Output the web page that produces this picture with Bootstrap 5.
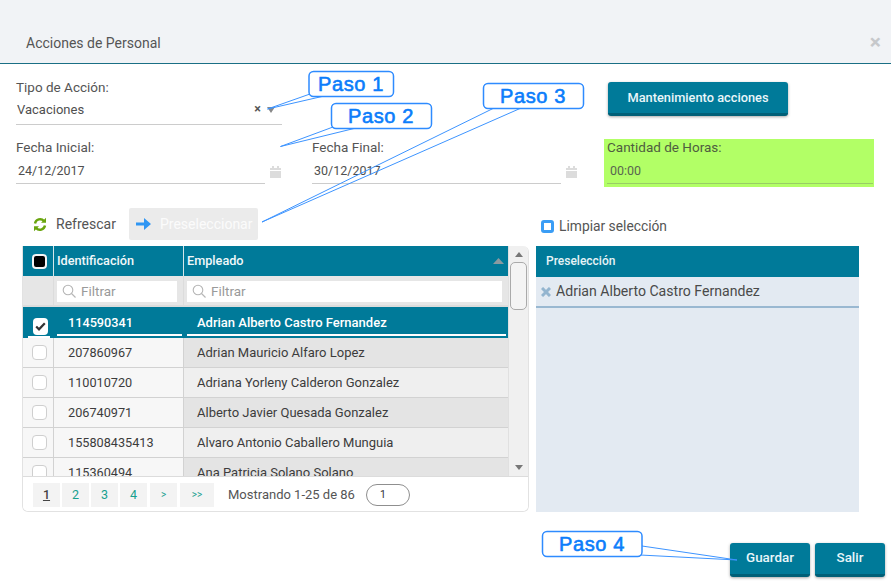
<!DOCTYPE html>
<html lang="es">
<head>
<meta charset="utf-8">
<title>Acciones de Personal</title>
<link href="https://cdn.jsdelivr.net/npm/bootstrap@5.3.0/dist/css/bootstrap.min.css" rel="stylesheet">
<style>
html,body{height:100%;overflow:hidden}
body{font-family:Roboto,"Liberation Sans",sans-serif;font-size:14px;color:#4a4a4a;background:#fff;position:relative}
.hdr{height:64px;background:#f1f3f6;border-bottom:1px solid #1a6f85;padding:0 10px 0 26px}
.hdr-title{font-size:14px;line-height:1;padding-bottom:13px;color:#555}
.hdr-x{color:#c6c8cb;font-size:21px;line-height:1;padding-bottom:10px;font-weight:700}
.top-row{height:75px;padding-left:16px}
.fld-label{font-size:13.5px;line-height:17px;color:#555}
.fld{border-bottom:1px solid #ccc;font-size:12.5px;color:#4f4f4f}
.f-tipo{width:266px;padding-top:15px}
.f-tipo .fld{margin-top:5px;height:24px;padding:0 0 6px 1px;font-size:13px}
.sel-x{font-size:12.5px;font-weight:700;color:#555}
.sel-caret{width:0;height:0;border:4.5px solid transparent;border-top:6px solid #888;border-bottom:0;margin:0 7px 0 6px}
.tb{background:#007a99;border:0;border-bottom:3px solid #005f77;border-radius:3px;box-shadow:0 1px 3px rgba(0,0,0,.35);font-size:12.8px;font-weight:500;color:#eaf6f9}
.tb-mant{width:180px;height:34px;margin:18px 0 0 326px}
.date-row{height:69px;padding-left:16px}
.f-date{width:281px;margin-right:15px}
.f-date .fld{width:249px;height:24px;padding-left:2px;display:flex;align-items:center}
.f-date .fld-label{margin-bottom:4px}
.ico-cal{margin-left:5px;margin-top:6px}
.f-hours{width:270px;height:48px;background:#b2ff66;margin-left:-4px;padding:0 1px 0 3px}
.f-hours .fld-label{line-height:16px;color:#4f5d40}
.f-hours .fld{height:24px;margin-top:5px;border-color:#99cc66;padding-left:3px;color:#5a6650;display:flex;align-items:center}
.main-row{padding-left:23px}
.left-col{width:506px}
.right-col{width:323px;margin-left:7px}
.tools{height:38px;padding-left:10px}
.refresh{font-size:14px;color:#555;margin-right:12px;width:84px;gap:9px;padding-bottom:6px}
.presel-btn{width:129px;height:32px;background:#ebebeb;border-radius:2px;color:#fbfbfb;font-size:14px;gap:9px;padding-left:7px;margin-top:-6px}
.clean-row{height:38px;padding-left:5px;padding-bottom:2px;gap:5px;font-size:13.8px;color:#555}
.clean-box{width:13px;height:13px;border:3px solid #3a9df5;border-radius:3px}
.grid-card{border:1px solid #e2e2e2;border-top:0;border-radius:0 6px 6px 6px;height:266px;margin-left:-1px;width:507px;overflow:hidden}
.grid-top{height:230px;overflow:hidden}
.grid-wrap{width:486px;overflow:hidden}
.grid-t{table-layout:fixed;width:485px;border-collapse:separate;border-spacing:0;font-size:13px}
.grid-t td,.grid-t th{padding:0;overflow:hidden;white-space:nowrap}
.c-chk{width:31px}
.c-id{width:130px}
.r-head th{height:30px;background:#007a99;color:#f1f8fa;font-weight:500;font-size:12.7px;border-right:1px solid #d5e6ea;padding-left:3px}
.r-head th:last-child{border-right:0}
.r-head th:first-child{padding-left:0}
.r-filt td{height:31px;background:#e6e6e6;border-right:1px solid #dcdcdc;border-bottom:2px solid #dcdcdc;padding:0 3px;padding-top:1px}
.r-filt td:last-child{border-right:0;padding-right:6px}
.filt-in{height:21px;background:#fff;padding-left:5px;gap:5px;color:#9a9a9a;font-size:13.5px;width:120px}
.filt-wide{width:100%}
.r-sel td{height:31px;background:#007a99;color:#fff;font-weight:500;vertical-align:top}
.inner-u{display:block;margin:0 2px 2px 3px;padding-left:11px;height:29px;line-height:31px;border-bottom:2px solid #fff}
.inner-name{padding-left:10px}
.inner-num{font-size:12.7px}
.r-data td{height:30px;border-right:1px solid #d2d2d2;border-bottom:1px solid #d2d2d2;color:#3c3c3c;background:#f7f7f7}
.r-data td:last-child{border-right:0;padding-left:13px}
.r-data td.c-num{padding-left:14px;font-size:12.7px}
.r-data.odd td:last-child{background:#e4e4e4}
.r-data.even td:last-child{background:#efefef}
.bx{width:15px;height:15px;border:1px solid #cfcfcf;border-radius:4px;background:#fff;margin-left:9px}
.bx-head{border:2px solid #f4f4f4;border-radius:4px;background:#000;width:15px;height:15px}
.bx-on{display:flex;align-items:center;justify-content:center;height:17px;margin-left:5px;border:0}
.chk-u{display:block;margin:0 4px 0 5px;border-bottom:2px solid #fff;padding:11px 0 1px;height:31px}
.sbar{width:20px;background:#f0f0f0;border-left:1px solid #e0e0e0;padding:0 1px}
.sb-up{width:0;height:0;border:4.5px solid transparent;border-bottom:5px solid #777;border-top:0;margin:6px auto 5px}
.sb-thumb{height:48px;background:#f4f4f4;border:1px solid #aaa;border-radius:5px}
.sb-down{width:0;height:0;border:4.5px solid transparent;border-top:5px solid #777;border-bottom:0;margin:0 auto 6px}
.pager{height:36px;border-top:1px solid #dcdcdc;padding-left:10px;background:#fff}
.pg{height:24px;background:#f3f3f3;color:#17a08e;font-size:12.5px;text-align:center;line-height:24px;margin-right:2px;width:27px}
.pg-on{color:#444;text-decoration:underline;font-weight:500}
.pg-s{font-size:10px;margin-left:1px}
.pg-w{width:34px}
.pg-info{font-size:13px;color:#555;margin-left:12px;white-space:nowrap}
.pg-input{width:44px;height:22px;border:1px solid #8f8f8f;border-radius:11px;margin-left:11px;font-size:10.5px;line-height:20px;padding-left:13px;color:#333}
.presel{height:266px;background:#e3eaf2;width:323px}
.presel-h{height:31px;background:#007a99;color:#e6f3f6;font-size:12px;font-weight:500;padding-left:10px;padding-bottom:2px}
.presel-i{height:31px;border-bottom:2px solid #99b8d1;font-size:14.1px;color:#4a4a4a;padding-left:5px;padding-top:1px;gap:5px}
.foot-row{margin-top:31px;padding-right:6px;gap:5px}
.tb-g{width:80px;height:34px;font-size:13.4px}
.tb-s{width:70px;height:34px;font-size:13.4px}
.callouts{position:absolute;left:0;top:0;pointer-events:none}
.callouts text{font-family:"Liberation Sans",Arial,sans-serif;font-size:20px;fill:#0b7dfb;stroke:#0b7dfb;stroke-width:.6px;letter-spacing:.6px}
</style>
</head>
<body>
<div class="hdr d-flex justify-content-between align-items-end">
  <div class="hdr-title">Acciones de Personal</div>
  <div class="hdr-x">&#215;</div>
</div>

<div class="top-row d-flex">
  <div class="f-tipo">
    <div class="fld-label">Tipo de Acción:</div>
    <div class="fld d-flex align-items-center justify-content-between">
      <span>Vacaciones</span>
      <span class="d-flex align-items-center"><span class="sel-x">&#215;</span><span class="sel-caret"></span></span>
    </div>
  </div>
  <button class="tb tb-mant" type="button">Mantenimiento acciones</button>
</div>

<div class="date-row d-flex">
  <div class="f-date">
    <div class="fld-label">Fecha Inicial:</div>
    <div class="d-flex">
      <div class="fld">24/12/2017</div>
      <svg class="ico-cal" width="11" height="12" viewBox="0 0 11 12"><path fill="#dcdcdc" d="M0 2h2V0h2v2h3V0h2v2h2v2H0zM0 5h11v7H0z"/></svg>
    </div>
  </div>
  <div class="f-date">
    <div class="fld-label">Fecha Final:</div>
    <div class="d-flex">
      <div class="fld">30/12/2017</div>
      <svg class="ico-cal" width="11" height="12" viewBox="0 0 11 12"><path fill="#dcdcdc" d="M0 2h2V0h2v2h3V0h2v2h2v2H0zM0 5h11v7H0z"/></svg>
    </div>
  </div>
  <div class="f-hours">
    <div class="fld-label">Cantidad de Horas:</div>
    <div class="fld">00:00</div>
  </div>
</div>

<div class="main-row d-flex">
  <div class="left-col">
    <div class="tools d-flex align-items-center">
      <div class="refresh d-flex align-items-center">
        <svg width="14" height="15" viewBox="0 0 14 15" fill="none" stroke="#6aa50f" stroke-width="2.4"><path d="M2 6.5A5.2 5.2 0 0 1 11 4"/><path d="M12 8.5A5.2 5.2 0 0 1 3 11"/><path fill="#6aa50f" stroke="none" d="M13 .8v5H8zM1 14.2v-5h5z"/></svg>
        <span>Refrescar</span>
      </div>
      <div class="presel-btn d-flex align-items-center">
        <svg width="15" height="12" viewBox="0 0 15 12"><path fill="#2f96f3" d="M0 4.5h8V0l7 6-7 6V7.500H0z"/></svg>
        <span>Preseleccionar</span>
      </div>
    </div>
    <div class="grid-card">
      <div class="grid-top d-flex">
        <div class="grid-wrap">
          <table class="grid-t">
            <colgroup><col class="c-chk"><col class="c-id"><col></colgroup>
            <tr class="r-head">
              <th><div class="bx bx-head"></div></th>
              <th>Identificación</th>
              <th><div class="d-flex justify-content-between align-items-center">Empleado<svg width="11" height="6" viewBox="0 0 11 6" class="me-1"><path fill="#8a9aa0" d="M5.500 0L11 6H0z"/></svg></div></th>
            </tr>
            <tr class="r-filt">
              <td></td>
              <td><div class="filt-in d-flex align-items-center"><svg width="14" height="14" viewBox="0 0 14 14" fill="none" stroke="#b5b5b5" stroke-width="1.100"><circle cx="6" cy="6" r="4.800"/><path d="M9.500 9.500L13.500 13.500"/></svg>Filtrar</div></td>
              <td><div class="filt-in filt-wide d-flex align-items-center"><svg width="14" height="14" viewBox="0 0 14 14" fill="none" stroke="#b5b5b5" stroke-width="1.100"><circle cx="6" cy="6" r="4.800"/><path d="M9.500 9.500L13.500 13.500"/></svg>Filtrar</div></td>
            </tr>
            <tr class="r-sel">
              <td><span class="chk-u"><span class="bx bx-on"><svg width="11" height="9" viewBox="0 0 11 9"><path fill="none" stroke="#333" stroke-width="2.200" d="M1.200 4.500L4 7.300 9.800 1.200"/></svg></span></span></td>
              <td><span class="inner-u inner-num">114590341</span></td>
              <td><span class="inner-u inner-name">Adrian Alberto Castro Fernandez</span></td>
            </tr>
            <tr class="r-data odd"><td><div class="bx"></div></td><td class="c-num">207860967</td><td>Adrian Mauricio Alfaro Lopez</td></tr>
            <tr class="r-data even"><td><div class="bx"></div></td><td class="c-num">110010720</td><td>Adriana Yorleny Calderon Gonzalez</td></tr>
            <tr class="r-data odd"><td><div class="bx"></div></td><td class="c-num">206740971</td><td>Alberto Javier Quesada Gonzalez</td></tr>
            <tr class="r-data even"><td><div class="bx"></div></td><td class="c-num">155808435413</td><td>Alvaro Antonio Caballero Munguia</td></tr>
            <tr class="r-data odd"><td><div class="bx"></div></td><td class="c-num">115360494</td><td>Ana Patricia Solano Solano</td></tr>
          </table>
        </div>
        <div class="sbar d-flex flex-column">
          <div class="sb-up"></div>
          <div class="sb-thumb"></div>
          <div class="flex-grow-1"></div>
          <div class="sb-down"></div>
        </div>
      </div>
      <div class="pager d-flex align-items-center">
        <div class="pg pg-on">1</div><div class="pg">2</div><div class="pg">3</div><div class="pg">4</div>
        <div class="pg pg-s">&gt;</div><div class="pg pg-s pg-w">&gt;&gt;</div>
        <div class="pg-info">Mostrando 1-25 de 86</div>
        <div class="pg-input">1</div>
      </div>
    </div>
  </div>
  <div class="right-col">
    <div class="clean-row d-flex align-items-center"><span class="clean-box"></span><span>Limpiar selección</span></div>
    <div class="presel">
      <div class="presel-h d-flex align-items-center">Preselección</div>
      <div class="presel-i d-flex align-items-center">
        <svg width="10" height="10" viewBox="0 0 10 10"><path stroke="#94b5cf" stroke-width="3" d="M1 1l8 8M9 1l-8 8"/></svg>
        <span>Adrian Alberto Castro Fernandez</span>
      </div>
    </div>
  </div>
</div>

<div class="foot-row d-flex justify-content-end">
  <button class="tb tb-g" type="button">Guardar</button>
  <button class="tb tb-s" type="button">Salir</button>
</div>

<svg class="callouts" width="891" height="585" viewBox="0 0 891 585">
  <g fill="none" stroke="#3d94ff" stroke-width="1">
    <path d="M310 94L267.500 109 322 96.500"/>
    <path d="M333 127L280.500 146.500 354 128.500"/>
    <path d="M520 108.500L262 222M493 108.500L262 222"/>
    <path d="M642 546L737 560 640 555"/>
  </g>
  <g fill="#fff" stroke="#2e8bff" stroke-width="1.500">
    <rect x="309" y="71.500" width="84.500" height="25" rx="4.500"/>
    <rect x="331.500" y="103.500" width="100" height="25" rx="4.500"/>
    <rect x="483.500" y="83.500" width="100" height="25" rx="4.500"/>
    <rect x="542.500" y="531.500" width="99.500" height="25" rx="4.500"/>
  </g>
  <text x="318" y="91">Paso 1</text>
  <text x="348" y="123">Paso 2</text>
  <text x="500" y="103">Paso 3</text>
  <text x="559" y="551">Paso 4</text>
</svg>
<script src="https://cdn.jsdelivr.net/npm/bootstrap@5.3.0/dist/js/bootstrap.bundle.min.js"></script>
</body>
</html>
